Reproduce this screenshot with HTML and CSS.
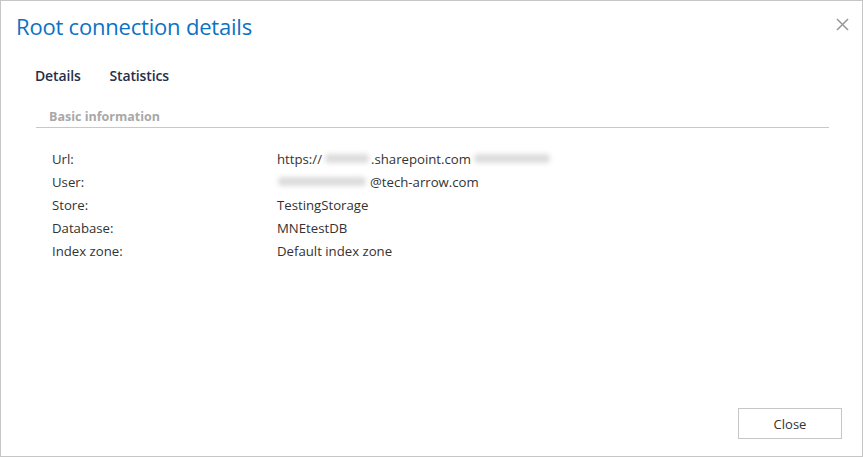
FILE: index.html
```html
<!DOCTYPE html>
<html>
<head>
<meta charset="utf-8">
<link rel="stylesheet" href="styles.css">
</head>
<body>
<div class="dialog">
  <div class="header">
    <h1 class="title">Root connection details</h1>
    <span class="close-x" aria-label="Close">
      <svg width="13" height="13" viewBox="0 0 13 13"><path d="M1 1L12 12M12 1L1 12" stroke="#9a9a9a" stroke-width="1.6" fill="none"/></svg>
    </span>
  </div>
  <div class="tabs">
    <span class="tab active">Details</span>
    <span class="tab">Statistics</span>
  </div>
  <div class="section">
    <div class="section-title">Basic information</div>
    <div class="rows">
      <div class="row"><span class="label">Url:</span><span class="value">https://<span class="blur w-a"></span>.sharepoint.com<span class="blur w-b"></span></span></div>
      <div class="row"><span class="label">User:</span><span class="value"><span class="blur w-c"></span>@tech-arrow.com</span></div>
      <div class="row"><span class="label">Store:</span><span class="value">TestingStorage</span></div>
      <div class="row"><span class="label">Database:</span><span class="value">MNEtestDB</span></div>
      <div class="row"><span class="label">Index zone:</span><span class="value">Default index zone</span></div>
    </div>
  </div>
  <div class="footer">
    <button class="btn">Close</button>
  </div>
</div>
</body>
</html>
```
FILE: styles.css
```css
* { box-sizing: border-box; }
html, body { margin: 0; padding: 0; background: #fff; }
body { width: 863px; height: 457px; font-family: "Open Sans", "Noto Sans", sans-serif; color: #333; }
.dialog {
  width: 863px; height: 457px;
  border: 1px solid #c6c6c6;
  display: flex; flex-direction: column;
  padding: 0 20px 0 15px;
}
.header { display: flex; justify-content: space-between; align-items: flex-start; padding-top: 10px; height: 52px; }
.title { margin: 0; font-weight: 400; font-size: 22px; color: #0b72c4; letter-spacing: -0.2px; line-height: 30px; }
.close-x { margin-top: 7px; margin-right: -7px; display: flex; }
.tabs { display: flex; gap: 29px; padding-left: 19px; height: 44px; align-items: center; }
.tab { font-size: 14px; font-weight: 600; color: #262f4a; letter-spacing: -0.15px; }
.section { padding-left: 20px; }
.section-title { font-size: 12.5px; font-weight: 700; color: #a8a8a8; padding-left: 13px; height: 31px; line-height: 16px; padding-top: 12px; border-bottom: 1px solid #c8c8c8; margin-right: 13px; }
.rows { padding-top: 19px; padding-left: 16px; display: flex; flex-direction: column; }
.row { display: flex; height: 23.2px; align-items: center; font-size: 13.2px; color: #333; }
.label { width: 225px; }
.value { display: flex; align-items: center; }
.blur { display: inline-block; height: 9px; background: #dcdcdc; border-radius: 4px; filter: blur(2.5px); }
.w-a { width: 44px; margin: 0 2px 0 3px; }
.w-b { width: 76px; margin-left: 3px; }
.w-c { width: 88px; margin: 0 4px 0 1px; }
.footer { margin-top: auto; display: flex; justify-content: flex-end; padding-bottom: 17px; }
.btn { width: 104px; height: 31px; border: 1px solid #c6c6c6; background: #fff; font-family: inherit; font-size: 13px; color: #333; padding: 0; }
```
